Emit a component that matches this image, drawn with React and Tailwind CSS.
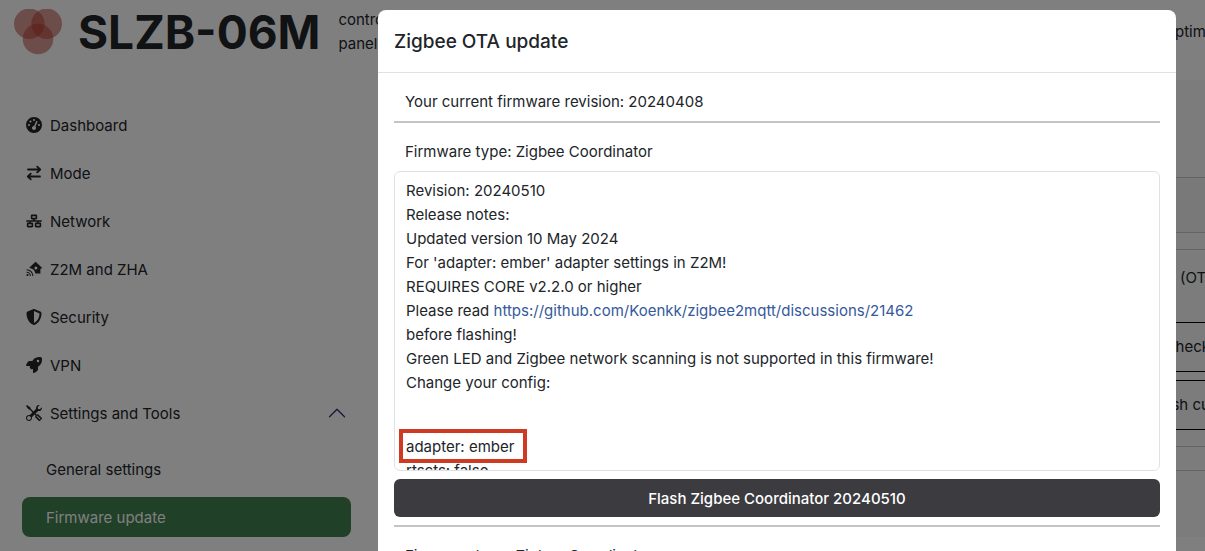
import React from 'react';
import { FaGaugeHigh, FaNetworkWired, FaShieldHalved, FaRocket } from 'react-icons/fa6';
import { BsTools, BsChevronUp } from 'react-icons/bs';

function Logo() {
  return (
    <svg viewBox="0 0 48 46" className="w-12 shrink-0" aria-hidden="true">
      <g fill="#b5382b" fillOpacity="0.5">
        <circle cx="15.3" cy="14.8" r="15.3" />
        <circle cx="32.7" cy="14.8" r="15.3" />
        <circle cx="24" cy="30" r="15.3" />
      </g>
    </svg>
  );
}

function SwapIcon({ className }) {
  return (
    <svg viewBox="0 0 16 16" className={className} fill="none" stroke="currentColor" strokeWidth="1.8" strokeLinecap="round" strokeLinejoin="round">
      <path d="M2 4.5H14M11.2 1.6L14.2 4.5L11.2 7.4" />
      <path d="M14 11.5H2M4.8 8.6L1.8 11.5L4.8 14.4" />
    </svg>
  );
}

function HomeSignalIcon({ className }) {
  return (
    <svg viewBox="0 0 16 16" className={className}>
      <path
        fill="currentColor"
        fillRule="evenodd"
        d="M9.6 0.8L16 6.8L15.2 7.8H14.4V12.6H9.4A6.8 6.8 0 0 0 3.9 7.1L3.4 6.6ZM9.9 5.6A1.5 1.5 0 1 0 9.9 8.6A1.5 1.5 0 1 0 9.9 5.6Z"
      />
      <circle cx="1.5" cy="14" r="1.1" fill="currentColor" />
      <path d="M0.6 11.2A3.8 3.8 0 0 1 4.4 15M0.6 8.7A6.3 6.3 0 0 1 6.9 15" fill="none" stroke="currentColor" strokeWidth="1.1" />
    </svg>
  );
}

const navItems = [
  { label: 'Dashboard', icon: FaGaugeHigh },
  { label: 'Mode', icon: SwapIcon },
  { label: 'Network', icon: FaNetworkWired },
  { label: 'Z2M and ZHA', icon: HomeSignalIcon },
  { label: 'Security', icon: FaShieldHalved },
  { label: 'VPN', icon: FaRocket },
];

function Sidebar() {
  return (
    <nav className="w-[329px] shrink-0 flex flex-col gap-2">
      {navItems.map(({ label, icon: Icon }) => (
        <a key={label} href="#" className="flex items-center gap-2 h-10 px-1">
          <Icon className="w-4 h-4" />
          <span className="pt-0.5">{label}</span>
        </a>
      ))}
      <button type="button" className="flex items-center gap-2 h-10 px-1 text-left">
        <BsTools className="w-4 h-4" />
        <span className="flex-1 pt-0.5">Settings and Tools</span>
        <BsChevronUp className="w-5 h-5 text-[#2c2c80]" />
      </button>
      <div className="flex flex-col gap-2 pt-2">
        <a href="#" className="flex items-center h-10 px-6 pt-0.5">General settings</a>
        <a href="#" className="flex items-center h-10 px-6 pt-0.5 rounded-lg bg-[#408050] text-white">Firmware update</a>
      </div>
    </nav>
  );
}

// Page content behind the dialog, only its right edge shows
function FirmwarePanel() {
  return (
    <main className="flex-1 min-w-0 bg-[#f8f8f8] whitespace-nowrap">
      <div className="mt-[97px] h-14 border-y border-[#c8c8c8] bg-[#f2f2f2]" />
      <section className="mt-4 border-y border-[#c8c8c8]">
        <p className="py-4 flex justify-end"><span className="w-[25px] overflow-hidden">(OTA)</span></p>
        <div className="py-4 flex flex-col gap-2">
          <button type="button" className="h-[50px] border-y border-black flex items-center justify-end">
            <span className="w-[38px] overflow-hidden text-left">check for updates</span>
          </button>
          <button type="button" className="h-[50px] border-y border-black flex items-center justify-end">
            <span className="w-[42px] overflow-hidden text-left">ash custom file</span>
          </button>
        </div>
        <div className="h-6 border-t border-[#c8c8c8]" />
      </section>
    </main>
  );
}

const notes = [
  'Revision: 20240510',
  'Release notes:',
  'Updated version 10 May 2024',
  "For 'adapter: ember' adapter settings in Z2M!",
  'REQUIRES CORE v2.2.0 or higher',
];

function ReleaseNotes() {
  return (
    <div className="h-[300px] overflow-hidden rounded-md border border-[#dee2e6] px-[11px] py-[7px]">
      {notes.map((line) => (
        <p key={line}>{line}</p>
      ))}
      <p>
        Please read{' '}
        <a href="https://github.com/Koenkk/zigbee2mqtt/discussions/21462" className="text-[#35599c]">
          https://github.com/Koenkk/zigbee2mqtt/discussions/21462
        </a>
      </p>
      <p>before flashing!</p>
      <p>Green LED and Zigbee network scanning is not supported in this firmware!</p>
      <p>Change your config:</p>
      <pre className="mt-[34px] -ml-[7px] font-[inherit]">
        <span className="inline-block border-4 border-[#cf3a22] pt-0.5 pl-[3px] pr-[9px]">adapter: ember</span>
        <span className="block -mt-1 pl-[7px]">rtscts: false</span>
      </pre>
    </div>
  );
}

function UpdateDialog() {
  return (
    <div role="dialog" aria-labelledby="ota-title" className="w-full max-w-[798px] rounded-lg bg-white">
      <header className="px-4 pt-[18px] pb-4 border-b border-[#dee2e6]">
        <h2 id="ota-title" className="text-[19px] leading-7 font-medium">Zigbee OTA update</h2>
      </header>
      <div className="px-4 pt-[17px]">
        <p className="px-[11px]">Your current firmware revision: 20240408</p>
        <hr className="mt-[7px] mb-[17px] border-t-2 border-[#c4c4c4]" />
        <p className="px-[11px] mb-[7px]">Firmware type: Zigbee Coordinator</p>
        <ReleaseNotes />
        <button type="button" className="mt-2 h-[38px] w-full rounded-md bg-[#3b3b40] pt-0.5 font-medium text-white">
          Flash Zigbee Coordinator 20240510
        </button>
        <hr className="mt-2 mb-[17px] border-t-2 border-[#c4c4c4]" />
        <p className="px-[11px] pb-4">Firmware type: Zigbee Coordinator</p>
      </div>
    </div>
  );
}

export default function App() {
  return (
    <div className="relative h-screen overflow-hidden bg-white font-['Inter',sans-serif] text-[15px] leading-6 text-[#212529]">
      <header className="flex items-center h-20 pl-[14px] pb-4">
        <Logo />
        <h1 className="ml-4 text-[46px] leading-none font-bold">SLZB-06M</h1>
        <p className="ml-[18px] w-14">control panel</p>
        <p className="ml-auto w-[39px] overflow-hidden whitespace-nowrap">optimal</p>
      </header>
      <div className="flex gap-10 pl-[22px]">
        <div className="pt-[25px]"><Sidebar /></div>
        <FirmwarePanel />
      </div>
      <div className="fixed inset-0 flex items-start justify-end overflow-hidden bg-black/50 pt-[10px] pr-[29px] pl-4">
        <UpdateDialog />
      </div>
    </div>
  );
}
